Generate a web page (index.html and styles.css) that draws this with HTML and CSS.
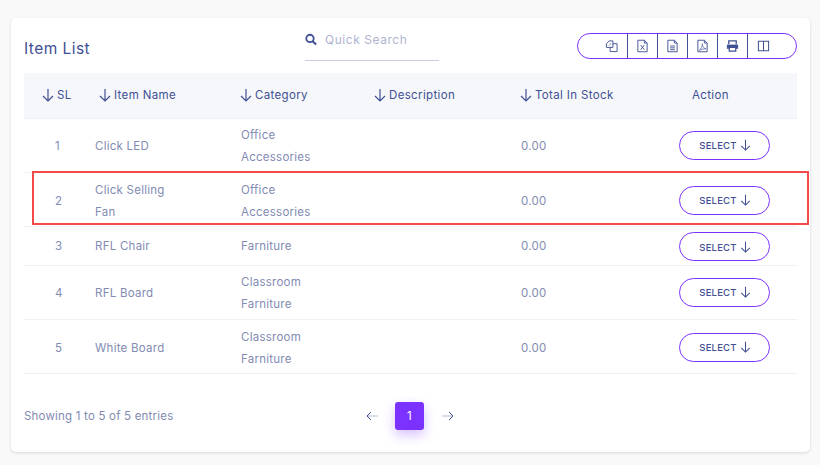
FILE: index.html
```html
<!DOCTYPE html>
<html lang="en">
<head>
<meta charset="utf-8">
<title>Item List</title>
<link rel="stylesheet" href="styles.css">
</head>
<body>
<svg class="defs" width="0" height="0" aria-hidden="true">
  <symbol id="down" viewBox="0 0 12 14"><path d="M6 1v12M1 8l5 5 5-5" fill="none" stroke="currentColor" stroke-width="1.2"/></symbol>
</svg>
<main class="card">
  <header class="top">
    <h1 class="title">Item List</h1>
    <label class="search">
      <svg class="search-icon" viewBox="0 0 13 13"><circle cx="5.4" cy="5.4" r="4" fill="none" stroke="currentColor" stroke-width="2"/><path d="M8.3 8.3l3.7 3.7" stroke="currentColor" stroke-width="2.2"/></svg>
      <span class="placeholder">Quick Search</span>
    </label>
    <div class="tools">
      <span class="tool tool-first"><svg viewBox="0 0 14 14" class="ico"><path d="M1.500 4.500l3-3h4v7h-7z" fill="none" stroke="currentColor"/><path d="M5.500 8.500v4.500h7.500V4.500H8.500" fill="none" stroke="currentColor"/><path d="M4.500 6.500l2-2.500" stroke="currentColor" stroke-width=".7"/></svg></span>
      <span class="tool"><svg viewBox="0 0 14 14" class="ico"><path d="M2 .8h7l3 3v9.400H2zM9 .8v3h3" fill="none" stroke="currentColor"/><path d="M5 6l4 5M9 6l-4 5" stroke="currentColor"/></svg></span>
      <span class="tool"><svg viewBox="0 0 14 14" class="ico"><path d="M2 .8h7l3 3v9.400H2zM9 .8v3h3" fill="none" stroke="currentColor"/><path d="M4.500 7h5M4.500 9h5M4.500 11h5" stroke="currentColor"/></svg></span>
      <span class="tool"><svg viewBox="0 0 14 14" class="ico"><path d="M2 .8h7l3 3v9.400H2zM9 .8v3h3" fill="none" stroke="currentColor"/><path d="M3.500 11.500C6 10 7 7 6.800 4.500c0 3 1.500 5 4 5.500-2.500 0-5 .5-7.300 1.500z" fill="none" stroke="currentColor" stroke-width=".7"/></svg></span>
      <span class="tool"><svg viewBox="0 0 14 14" class="ico"><path d="M3 5V1.500h8V5" fill="none" stroke="currentColor" stroke-width="1.400"/><path d="M1 5.500h12v4.500H1z" fill="currentColor"/><path d="M3.500 8.500h7v4h-7z" fill="#fff" stroke="currentColor" stroke-width="1.300"/></svg></span>
      <span class="tool tool-last"><svg viewBox="0 0 14 14" class="ico"><path d="M1.500 2h11v10h-11zM7 2v10" fill="none" stroke="currentColor" stroke-width="1.100"/></svg></span>
    </div>
  </header>

  <table class="items">
    <colgroup>
      <col class="c-sl"><col class="c-name"><col class="c-cat"><col class="c-desc"><col class="c-total"><col class="c-act">
    </colgroup>
    <thead>
      <tr>
        <th class="h-sl"><svg class="arrow"><use href="#down"/></svg>SL</th>
        <th class="h-name"><svg class="arrow"><use href="#down"/></svg>Item Name</th>
        <th><svg class="arrow"><use href="#down"/></svg>Category</th>
        <th><svg class="arrow"><use href="#down"/></svg>Description</th>
        <th><svg class="arrow"><use href="#down"/></svg>Total In Stock</th>
        <th class="h-act">Action</th>
      </tr>
    </thead>
    <tbody>
      <tr class="tall">
        <td class="sl">1</td><td class="name">Click LED</td><td>Office<br>Accessories</td><td></td><td>0.00</td>
        <td class="act"><button class="select">SELECT<svg class="arrow small"><use href="#down"/></svg></button></td>
      </tr>
      <tr class="tall lower">
        <td class="sl">2</td><td class="name">Click Selling<br>Fan</td><td>Office<br>Accessories</td><td></td><td>0.00</td>
        <td class="act"><button class="select">SELECT<svg class="arrow small"><use href="#down"/></svg></button></td>
      </tr>
      <tr class="short">
        <td class="sl">3</td><td class="name">RFL Chair</td><td>Farniture</td><td></td><td>0.00</td>
        <td class="act"><button class="select">SELECT<svg class="arrow small"><use href="#down"/></svg></button></td>
      </tr>
      <tr class="tall">
        <td class="sl">4</td><td class="name">RFL Board</td><td>Classroom<br>Farniture</td><td></td><td>0.00</td>
        <td class="act"><button class="select">SELECT<svg class="arrow small"><use href="#down"/></svg></button></td>
      </tr>
      <tr class="tall lower">
        <td class="sl">5</td><td class="name">White Board</td><td>Classroom<br>Farniture</td><td></td><td>0.00</td>
        <td class="act"><button class="select">SELECT<svg class="arrow small"><use href="#down"/></svg></button></td>
      </tr>
    </tbody>
  </table>

  <footer class="foot">
    <span class="info">Showing 1 to 5 of 5 entries</span>
    <nav class="pager">
      <svg class="pg-arrow" viewBox="0 0 12 10"><path d="M12 5H1" stroke="#b4b9d3"/><path d="M5 1L1 5l4 4" fill="none" stroke="#415094"/></svg>
      <span class="page">1</span>
      <svg class="pg-arrow" viewBox="0 0 12 10"><path d="M0 5h11" stroke="#b4b9d3"/><path d="M7 1l4 4-4 4" fill="none" stroke="#415094"/></svg>
    </nav>
  </footer>
  <div class="highlight"></div>
</main>
</body>
</html>
```
FILE: styles.css
```css
* { box-sizing: border-box; }
html, body { height: 100%; }
body {
  margin: 0;
  padding: 18px 10px 13px 11px;
  background: #f9f9f9;
  font-family: "Inter", "Open Sans", sans-serif;
  font-size: 11.5px;
  letter-spacing: .25px;
  color: #828bb2;
  overflow: hidden;
}
.defs { position: absolute; }
.card {
  position: relative;
  height: 434px;
  padding: 15px 13px 0;
  background: #fff;
  border-radius: 5px;
  box-shadow: 0 1px 3px rgba(60, 60, 90, .18);
}
.top {
  display: flex;
  align-items: flex-start;
  height: 40px;
}
.title {
  width: 281px;
  margin: 5px 0 0;
  font-size: 15.5px;
  line-height: 22px;
  font-weight: 400;
  letter-spacing: .45px;
  color: #415094;
}
.search {
  display: flex;
  align-items: flex-start;
  gap: 8px;
  width: 134px;
  height: 28px;
  border-bottom: 1px solid #c9cde2;
}
.search-icon { width: 12px; height: 13px; color: #415094; }
.placeholder { font-size: 12px; line-height: 13px; letter-spacing: .55px; color: #afb4d2; }
.tools {
  display: flex;
  margin-left: 138px;
  width: 220px;
  height: 26px;
  border: 1px solid #7c32ff;
  border-radius: 13px;
  color: #415094;
}
.tool {
  display: flex;
  align-items: center;
  justify-content: center;
  width: 30px;
  border-right: 1px solid #415094;
}
.tool-first { width: 50px; padding-left: 18px; }
.tool-last { border-right: 0; flex: 1; padding-right: 18px; }
.ico { width: 13px; height: 14px; }
.items {
  width: 773px;
  table-layout: fixed;
  border-collapse: collapse;
}
.c-sl { width: 61px; }
.c-name { width: 147px; }
.c-cat { width: 134px; }
.c-desc { width: 146px; }
.c-total { width: 142px; }
.c-act { width: 143px; }
th {
  height: 45px;
  padding: 0 0 0 8px;
  background: #f5f7fa;
  border-bottom: 1px solid #edf0f6;
  font-weight: 400;
  font-size: 11.5px;
  letter-spacing: .35px;
  text-align: left;
  color: #415094;
  white-space: nowrap;
}
.h-sl { padding-left: 18px; }
.h-name { padding-left: 14px; }
.h-act { padding-left: 38px; }
.arrow {
  width: 12px;
  height: 14px;
  margin-right: 3px;
  vertical-align: -3px;
}
.small { width: 11px; height: 12px; margin: 0 0 0 3px; vertical-align: -2px; }
td {
  padding: 1px 0 0 9px;
  border-bottom: 1px solid #eef0f6;
  line-height: 22px;
  vertical-align: middle;
}
.tall { height: 54px; }
.short { height: 39px; }
.lower td { padding-top: 3px; }
.sl { padding-left: 31px; }
td.name { padding-left: 10px; }
td.act { padding: 0 0 0 25px; }
.lower td.act, .short td.act { padding-top: 2px; }
.select {
  display: block;
  width: 91px;
  height: 29px;
  padding: 0 0 0 1px;
  background: #fff;
  border: 1px solid #7c32ff;
  border-radius: 15px;
  font: 500 9.5px/1 "Inter", sans-serif;
  letter-spacing: .2px;
  color: #415094;
}
.foot {
  display: flex;
  align-items: center;
  height: 28px;
  margin-top: 28px;
}
.info { width: 342px; font-size: 11.5px; letter-spacing: .2px; }
.pager { display: flex; align-items: center; gap: 17px; }
.pg-arrow { width: 12px; height: 10px; }
.page {
  display: flex;
  align-items: center;
  justify-content: center;
  width: 29px;
  height: 28px;
  margin-right: 1px;
  background: #7c32ff;
  border-radius: 3px;
  color: #fff;
  font-size: 11.5px;
  box-shadow: 0 5px 12px rgba(124, 50, 255, .3);
}
.highlight {
  position: absolute;
  left: 21px;
  top: 153px;
  width: 777px;
  height: 54px;
  border: 2px solid #f44a4a;
  pointer-events: none;
}
```
